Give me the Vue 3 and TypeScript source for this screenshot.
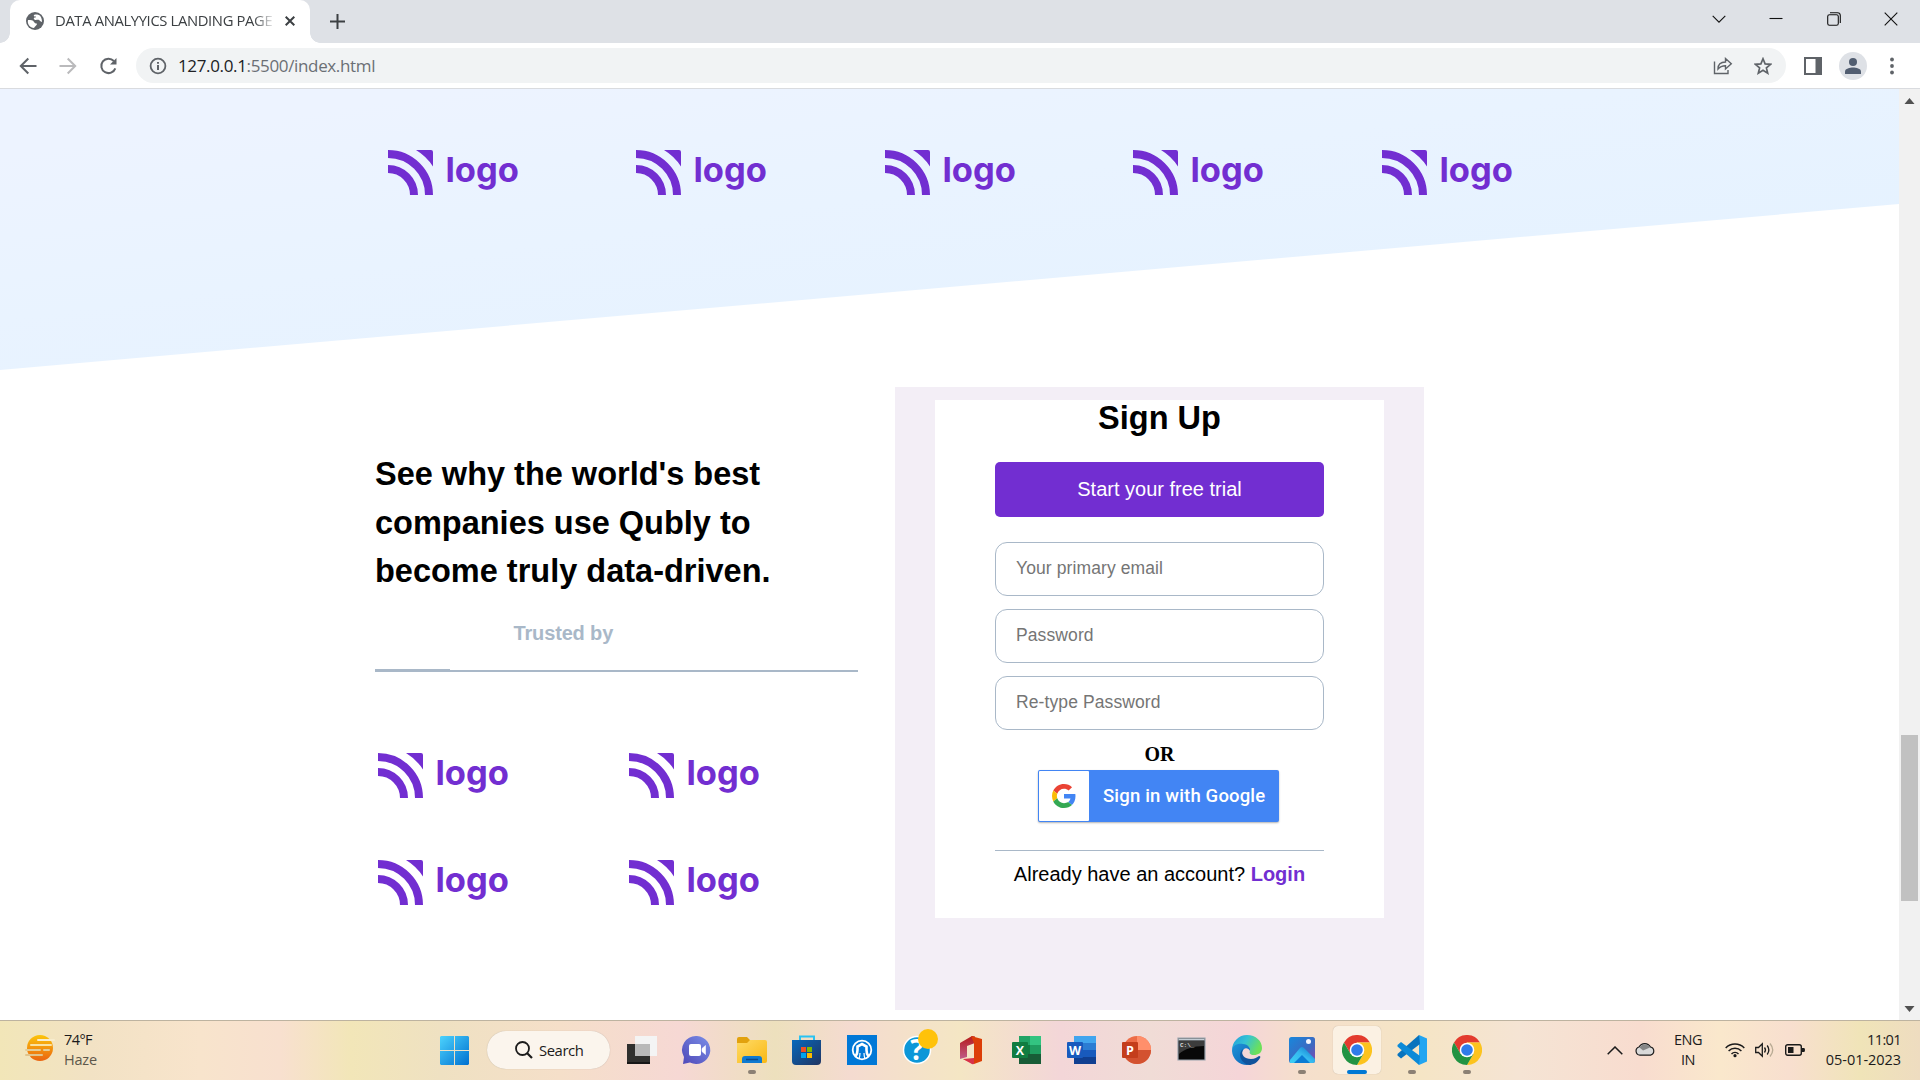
<script setup lang="ts">
interface Field {
  type: string
  placeholder: string
}

const partners: number[] = [1, 2, 3, 4, 5]
const trusted: number[] = [1, 2, 3, 4]
const fields: Field[] = [
  { type: 'text', placeholder: 'Your primary email' },
  { type: 'password', placeholder: 'Password' },
  { type: 'password', placeholder: 'Re-type Password' },
]
</script>

<template>
  <svg class="defs" width="0" height="0">
    <defs>
      <symbol id="brand" viewBox="0 0 132 48">
        <g fill="none" stroke="#722ed1" stroke-width="8">
          <path d="M0 4A41 41 0 0 1 41 45" />
          <path d="M0 19A26 26 0 0 1 26 45" />
        </g>
        <path d="M28 0H43Q45 0 45 2V16.5A53 53 0 0 0 28 0Z" fill="#722ed1" />
        <text x="57.5" y="32" font-family="Inter, sans-serif" font-size="34" font-weight="700" fill="#722ed1" textLength="73.5" lengthAdjust="spacingAndGlyphs">logo</text>
      </symbol>
      <symbol id="chrome" viewBox="-15 -15 30 30">
        <path d="M-13 -7.5A15 15 0 0 1 13 -7.5H0L-6.5 3.75Z" fill="#e33b2e" />
        <path d="M13 -7.5A15 15 0 0 1 0 15L6.5 3.75L0 -7.5Z" fill="#fcc31e" />
        <path d="M0 15A15 15 0 0 1 -13 -7.5L-6.5 3.75L6.5 3.75Z" fill="#229342" />
        <circle r="7.3" fill="#fff" />
        <circle r="5.8" fill="#2f7bea" />
      </symbol>
      <linearGradient id="win" x1="0" y1="0" x2="1" y2="1"><stop offset="0" stop-color="#4cd3fd" /><stop offset="1" stop-color="#0070d0" /></linearGradient>
      <linearGradient id="sun" x1="0" y1="0" x2="0" y2="1"><stop offset="0" stop-color="#fcc50c" /><stop offset="1" stop-color="#ea6410" /></linearGradient>
      <linearGradient id="chat" x1="1" y1="0" x2="0" y2="1"><stop offset="0" stop-color="#7a8fe8" /><stop offset="1" stop-color="#5048b8" /></linearGradient>
      <linearGradient id="folder" x1="0" y1="0" x2="1" y2="1"><stop offset="0" stop-color="#ffdb67" /><stop offset="1" stop-color="#f9b814" /></linearGradient>
      <linearGradient id="store" x1="0" y1="0" x2="1" y2="1"><stop offset="0" stop-color="#0669bd" /><stop offset="1" stop-color="#213461" /></linearGradient>
      <linearGradient id="edgeTop" x1="0" y1="0" x2="1" y2=".4"><stop offset="0" stop-color="#229bdc" /><stop offset=".5" stop-color="#35c3d4" /><stop offset="1" stop-color="#6ce05a" /></linearGradient>
      <linearGradient id="edgeLow" x1="0" y1="0" x2="1" y2="1"><stop offset="0" stop-color="#2094d8" /><stop offset="1" stop-color="#0b60b4" /></linearGradient>
      <linearGradient id="photo" x1="0" y1="0" x2="1" y2="1"><stop offset="0" stop-color="#1888dc" /><stop offset=".6" stop-color="#3d68c0" /><stop offset="1" stop-color="#8a45b0" /></linearGradient>
      <linearGradient id="hill" x1="0" y1="1" x2="1" y2="0"><stop offset="0" stop-color="#3bd0f5" /><stop offset=".5" stop-color="#35b9ef" /><stop offset="1" stop-color="#0b72c8" /></linearGradient>
      <linearGradient id="office" x1="0" y1="0" x2="0" y2="1"><stop offset="0" stop-color="#b51b1b" /><stop offset="1" stop-color="#c05a88" /></linearGradient>
    </defs>
  </svg>

  <div class="screen">
    <header class="tabs">
      <div class="tab">
        <svg class="favicon" width="18" height="18" viewBox="-9 -9 18 18">
          <circle r="9" fill="#5f6368" />
          <path d="M-7-1C-4-1-2-1-1 1S2 2 2 3 0 5-1 7C-5 7-8 3-7-1ZM-1-6C1-7 4-6 4-6C6-5 7-2 7 1C5 0 5 0 4-1S0 0-1-2 1-3 1-4-2-4-1-6Z" fill="#fff" />
        </svg>
        <span class="tab-title">DATA ANALYYICS LANDING PAGE</span>
        <svg class="tab-close" width="10" height="10" viewBox="0 0 10 10"><path d="M.7.7L9.3 9.3M9.3.7L.7 9.3" stroke="#3c4043" stroke-width="2" /></svg>
      </div>
      <svg class="new-tab" width="15" height="15" viewBox="0 0 15 15"><path d="M7.5 0V15M0 7.5H15" stroke="#3c4043" stroke-width="2" /></svg>
      <div class="window-controls">
        <svg width="14" height="14" viewBox="0 0 14 14"><path d="M.7 3.8L7 10.2L13.3 3.8" /></svg>
        <svg width="14" height="14" viewBox="0 0 14 14"><path d="M.5 6.5H13.5" /></svg>
        <svg width="14" height="14" viewBox="0 0 14 14"><rect x=".7" y="2.7" width="10.6" height="10.6" rx="1.8" /><path d="M3 .7H10.5Q13.3 .7 13.3 3.5V11" /></svg>
        <svg width="14" height="14" viewBox="0 0 14 14"><path d="M.7 .7L13.3 13.3M13.3 .7L.7 13.3" /></svg>
      </div>
    </header>

    <nav class="toolbar">
      <svg class="nav-icon" width="18" height="18" viewBox="0 0 18 18"><path d="M17.5 9H2M9.3 1.5L1.8 9L9.3 16.5" /></svg>
      <svg class="nav-icon off" width="18" height="18" viewBox="0 0 18 18"><path d="M.5 9H16M8.7 1.5L16.2 9L8.7 16.5" /></svg>
      <svg class="nav-icon" width="18" height="18" viewBox="0 0 18 18"><path d="M16.3 11.3A7.2 7.2 0 1 1 14.8 4" /><path d="M17.5 1V7.5H11Z" fill="#5f6368" stroke="none" /></svg>
      <div class="omnibox">
        <svg width="18" height="18" viewBox="0 0 18 18"><circle cx="9" cy="9" r="7.4" fill="none" stroke="#5f6368" stroke-width="1.8" /><path d="M9 8V13M9 5V6.8" stroke="#5f6368" stroke-width="2" /></svg>
        <span class="url"><b>127.0.0.1</b>:5500/index.html</span>
        <svg class="share" width="20" height="18" viewBox="0 0 20 18" fill="none" stroke="#5f6368" stroke-width="1.4"><path d="M1.5 4.5V16.5H15V13" /><path d="M5 12C5 7.500 8 5 12.500 5V1.500L18.300 6.700L12.500 12V8.700C9 8.700 7 9.500 5 12Z" /></svg>
        <svg class="star" width="18" height="18" viewBox="0 0 18 18"><path d="M9 1.800L11.100 6.900L16.600 7.300L12.400 10.900L13.700 16.200L9 13.300L4.300 16.200L5.600 10.900L1.400 7.300L6.900 6.900Z" fill="none" stroke="#5f6368" stroke-width="1.700" /></svg>
      </div>
      <svg class="side" width="18" height="18" viewBox="0 0 18 18"><rect x="1" y="1" width="16" height="16" fill="#fff" stroke="#5f6368" stroke-width="2" /><path d="M11.500 0H18V18H11.500Z" fill="#5f6368" /></svg>
      <svg class="avatar" width="28" height="28" viewBox="-14 -14 28 28"><circle r="14" fill="#dee1e6" /><circle cy="-4" r="4" fill="#515d70" /><path d="M-8 8V5.500C-8 2.500-3 1.500 0 1.500S8 2.500 8 5.500V8Z" fill="#515d70" /></svg>
      <svg class="dots" width="4" height="18" viewBox="0 0 4 18" fill="#5f6368"><circle cx="2" cy="2.500" r="1.900" /><circle cx="2" cy="9" r="1.900" /><circle cx="2" cy="15.500" r="1.900" /></svg>
    </nav>

    <div class="viewport">
      <main class="page">
        <section class="hero">
          <svg v-for="n in partners" :key="n" class="logo"><use href="#brand" /></svg>
        </section>
        <section class="join">
          <div class="pitch">
            <h2>See why the world's best<br>companies use Qubly to<br>become truly data-driven.</h2>
            <p class="trusted">Trusted by</p>
            <div class="rule"><i></i></div>
            <div class="logo-grid">
              <svg v-for="n in trusted" :key="n" class="logo"><use href="#brand" /></svg>
            </div>
          </div>
          <div class="panel">
            <form class="card">
              <h2>Sign Up</h2>
              <button type="button" class="trial">Start your free trial</button>
              <input v-for="f in fields" :key="f.placeholder" :type="f.type" :placeholder="f.placeholder">
              <strong class="or">OR</strong>
              <div class="google">
                <span class="g-box">
                  <svg width="24" height="24" viewBox="0 0 48 48">
                    <path fill="#EA4335" d="M24 9.500c3.540 0 6.710 1.220 9.210 3.600l6.850-6.850C35.900 2.380 30.470 0 24 0 14.620 0 6.510 5.380 2.560 13.220l7.980 6.190C12.430 13.720 17.740 9.500 24 9.500z" />
                    <path fill="#4285F4" d="M46.980 24.550c0-1.570-.15-3.090-.38-4.550H24v9.020h12.940c-.58 2.960-2.260 5.480-4.780 7.180l7.730 6c4.510-4.180 7.090-10.360 7.090-17.650z" />
                    <path fill="#FBBC05" d="M10.530 28.590c-.48-1.450-.76-2.990-.76-4.590s.27-3.140.76-4.590l-7.980-6.190C.92 16.460 0 20.120 0 24c0 3.880.92 7.540 2.560 10.780l7.970-6.190z" />
                    <path fill="#34A853" d="M24 48c6.480 0 11.930-2.130 15.890-5.810l-7.730-6c-2.150 1.450-4.920 2.300-8.160 2.300-6.260 0-11.570-4.220-13.470-9.910l-7.980 6.190C6.510 42.620 14.620 48 24 48z" />
                  </svg>
                </span>
                <span class="g-text">Sign in with Google</span>
              </div>
              <p class="login">Already have an account? <b>Login</b></p>
            </form>
          </div>
        </section>
      </main>
      <aside class="scrollbar">
        <svg width="11" height="6" viewBox="0 0 10 6"><path d="M0 6L5 0L10 6Z" fill="#505050" /></svg>
        <i class="thumb"></i>
        <svg class="down" width="11" height="6" viewBox="0 0 10 6"><path d="M0 0L5 6L10 0Z" fill="#505050" /></svg>
      </aside>
    </div>

    <footer class="taskbar">
      <div class="weather">
        <svg width="30" height="28" viewBox="0 0 30 28">
          <circle cx="15" cy="13" r="13" fill="url(#sun)" />
          <g stroke-linecap="round" stroke-width="2"><path d="M13 5H29" stroke="#f7edcf" /><path d="M6 10H26" stroke="#f9e3a4" /><path d="M1 15H15M19 15H24" stroke="#e3cd98" /><path d="M1 20H17" stroke="#e0c48c" /></g>
        </svg>
        <div><span class="temp">74°F</span><span class="haze">Haze</span></div>
      </div>

      <svg class="start" width="29" height="29" viewBox="0 0 29 29"><path d="M1 0H14V14H0V1ZM15 0H28L29 1V14H15ZM0 15H14V29H1L0 28ZM15 15H29V28L28 29H15Z" fill="url(#win)" /></svg>

      <div class="search">
        <svg width="18" height="18" viewBox="0 0 18 18"><circle cx="7.500" cy="7.500" r="6.500" fill="none" stroke="#1b1b1b" stroke-width="1.800" /><path d="M12 12L17 17" stroke="#1b1b1b" stroke-width="2.200" /></svg>
        <span>Search</span>
      </div>

      <div class="apps">
        <div class="slot"><svg viewBox="-24 -24 48 48"><path d="M-15-6H8V14H-15Z" fill="#30302e" /><path d="M-15 12H8V14H-15Z" fill="#171717" /><path d="M-7-14H15V6H-7Z" fill="#f4f4f4" /><path d="M-7-6H8V6H-7Z" fill="#b9b9b9" /></svg></div>
        <div class="slot"><svg viewBox="-24 -24 48 48"><path d="M0-14A14 14 0 1 1-7 12.500L-14 14L-13 7A14 14 0 0 1 0-14Z" fill="url(#chat)" /><rect x="-8" y="-6" width="12" height="12" rx="2" fill="#fff" /><path d="M5-1.500L8.500-4.500V4.500L5 1.500Z" fill="#fff" stroke="#fff" stroke-width=".6" /></svg></div>
        <div class="slot"><svg viewBox="-24 -24 48 48"><path d="M-15-11Q-15-13-13-13H-5L-2-10H4V0H-15Z" fill="#e2a20e" /><path d="M-15-7H-5L-2-10H13Q15-10 15-8V11Q15 13 13 13H-15Z" fill="url(#folder)" /><path d="M-10 13V9Q-10 6-7 6H7Q10 6 10 9V13Z" fill="#0f7ad0" /><path d="M-6 9.500H6" stroke="#0a4a8c" stroke-width="1.500" /></svg><i></i></div>
        <div class="slot"><svg viewBox="-24 -24 48 48"><path d="M-7-9V-13.500H7V-9" fill="none" stroke="#29c3f3" stroke-width="2" /><path d="M-15-10H14V11Q14 15 10 15H-11Q-15 15-15 11Z" fill="url(#store)" /><path d="M-6-3H-1V2H-6Z" fill="#f25022" /><path d="M0-3H5V2H0Z" fill="#7fba00" /><path d="M-6 3H-1V8H-6Z" fill="#00a4ef" /><path d="M0 3H5V8H0Z" fill="#ffb900" /></svg></div>
        <div class="slot"><svg viewBox="-24 -24 48 48"><path d="M-15-15H15V15H-15Z" fill="#0078d7" /><circle r="9.300" fill="none" stroke="#fff" stroke-width="1.800" /><path d="M-6.500 6.500Q-4.500 4-4.500 0V-3.500L0-6L4.500-3.500V0Q4.500 4 6.500 6.500" fill="none" stroke="#fff" stroke-width="2.600" /><path d="M-3 9Q-2 6-2 3M3 9Q2 6 2 3" fill="none" stroke="#fff" stroke-width="1.200" /></svg></div>
        <div class="slot"><svg viewBox="-24 -24 48 48"><circle r="13.500" fill="#0c97d8" stroke="#fff" stroke-width="1.500" /><text y="10" text-anchor="middle" font-family="Open Sans, sans-serif" font-size="28" font-weight="700" fill="#fff">?</text><circle cx="11" cy="-11" r="10" fill="#ffc20a" /></svg></div>
        <div class="slot"><svg viewBox="-24 -24 48 48"><path d="M-12-7L0-14L3-13.500V-7L-5-4V7L-12 9Z" fill="url(#office)" /><path d="M-1-14L10-11V11L2 14L-9 9L2 10V-7Z" fill="#dc3e08" /><path d="M-9 9L2 8V14Q0 14.500-1 13.500Z" fill="#d8324a" /></svg></div>
        <div class="slot"><svg viewBox="-24 -24 48 48"><path d="M-8-14H3V0H-8Z" fill="#21a366" /><path d="M3-14H14V-5H3Z" fill="#33c481" /><path d="M3-5H14V4H3Z" fill="#1f9d60" /><path d="M-8-5H3V4H-8Z" fill="#107c41" /><path d="M-8 4H14V14H-8Z" fill="#185c37" /><rect x="-15" y="-8" width="16" height="16" rx="1" fill="#107c41" /><text x="-7" y="4.500" text-anchor="middle" font-family="Open Sans, sans-serif" font-size="12.500" font-weight="700" fill="#fff">X</text></svg></div>
        <div class="slot"><svg viewBox="-24 -24 48 48"><path d="M-8-14H14V-7H-8Z" fill="#41a5ee" /><path d="M-8-7H14V0H-8Z" fill="#2b7cd3" /><path d="M-8 0H14V7H-8Z" fill="#185abd" /><path d="M-8 7H14V14H-8Z" fill="#103f91" /><rect x="-15" y="-8" width="16" height="16" rx="1" fill="#185abd" /><text x="-7" y="4.500" text-anchor="middle" font-family="Open Sans, sans-serif" font-size="12.500" font-weight="700" fill="#fff">W</text></svg></div>
        <div class="slot"><svg viewBox="-24 -24 48 48"><circle r="14" fill="#ed6c47" /><path d="M0-14A14 14 0 0 1 14 0H0Z" fill="#ff8f6b" /><path d="M-14 0H14A14 14 0 0 1-14 0Z" fill="#d35230" /><rect x="-15" y="-8" width="16" height="16" rx="1" fill="#c43e1c" /><text x="-7" y="4.500" text-anchor="middle" font-family="Open Sans, sans-serif" font-size="12.500" font-weight="700" fill="#fff">P</text></svg></div>
        <div class="slot"><svg viewBox="-24 -24 48 48"><path d="M-14-12H13V10H-14Z" fill="#080808" stroke="#9aa4ae" stroke-width="1.200" /><path d="M-13.500-11.500H12.500V-9.500H-13.500Z" fill="#c3ccd4" /><path d="M-13-9H12V-4C2-4-8-1-13 4Z" fill="#3c3c3c" /><text x="-12" y="-3" font-family="Liberation Mono, monospace" font-size="6" font-weight="700" fill="#ddd">C:\_</text></svg></div>
        <div class="slot"><svg viewBox="-24 -24 48 48"><path d="M-15 0A15 15 0 0 1 0-15C9-15 15-9 15-2C15 3 11 5 7 5C3 5 2 3 3 1C4-3 0-5-4-5C-10-5-14-3-15 0Z" fill="url(#edgeTop)" /><path d="M-15 1C-15-5-9-7-4-6C1-6 4-2 3 1C1-3-4-3-5 3C-5 10 2 15 7 12Q4 15 0 15A15 15 0 0 1-15 1Z" fill="url(#edgeLow)" /><path d="M-4-1C-7 5-2 9 4 9C8 9 10 7 12 6Q14 6 13 8C10 13 6 15 2 15C-6 13-10 4-4-1Z" fill="#10539c" /></svg></div>
        <div class="slot"><svg viewBox="-24 -24 48 48"><rect x="-13" y="-13" width="26" height="26" rx="2.500" fill="url(#photo)" /><path d="M-12 10L-2-2Q0-4 2-2L13 9V11Q13 13 11 13H-11Q-13 13-12 10Z" fill="url(#hill)" /><path d="M-8 13L0 5L8 13Z" fill="#0b7cd4" /><circle cx="6.500" cy="-8.500" r="2.500" fill="#f3f6fd" /></svg><i></i></div>
        <div class="slot active"><svg viewBox="-24 -24 48 48"><use href="#chrome" x="-15" y="-15" width="30" height="30" /></svg><i></i></div>
        <div class="slot"><svg viewBox="-24 -24 48 48"><path d="M7-15L15-11.500V11.500L7 15Z" fill="#22a5f1" /><path d="M7-15L8-6L-11 8.500L-14.500 5.500V4Z" fill="#0873bd" /><path d="M7 15L8 6L-11-8L-14.500-5V-3.500Z" fill="#0b8ad8" /></svg><i></i></div>
        <div class="slot"><svg viewBox="-24 -24 48 48"><use href="#chrome" x="-15" y="-15" width="30" height="30" /></svg><i></i></div>
      </div>

      <div class="tray">
        <svg class="t-chev" width="16" height="9" viewBox="0 0 16 9"><path d="M.7 8.300L8 1L15.300 8.300" fill="none" stroke="#1b1b1b" stroke-width="1.500" /></svg>
        <svg class="t-cloud" width="20" height="14" viewBox="0 0 20 14"><path d="M5 13.200A4.200 4.200 0 0 1 4 5A6.500 6.500 0 0 1 15.500 5A4.200 4.200 0 0 1 15.500 13.200Z" fill="#d9d9d9" stroke="#1b1b1b" stroke-width="1.200" /><path d="M4.500 5.500A6 6 0 0 1 15 5.500L8 8.500Z" fill="#868686" /></svg>
        <div class="lang"><span>ENG</span><span>IN</span></div>
        <svg class="t-wifi" width="20" height="16" viewBox="0 0 20 16" fill="none" stroke="#1b1b1b" stroke-width="1.500"><path d="M.7 6A13 13 0 0 1 19.300 6" /><path d="M3.600 9A9 9 0 0 1 16.400 9" /><path d="M6.500 12A5 5 0 0 1 13.500 12" /><circle cx="10" cy="13.700" r="1.600" fill="#1b1b1b" stroke="none" /></svg>
        <svg class="t-vol" width="20" height="16" viewBox="0 0 20 16" fill="none" stroke="#1b1b1b" stroke-width="1.300"><path d="M.7 5.500H3.500L7.300 1.700V14.300L3.500 10.500H.7Z" /><path d="M9.500 5.500Q11.500 8 9.500 10.500M12.200 3.500Q15.500 8 12.200 12.500" /><path d="M15 1.500Q20.500 8 15 14.500" stroke="#b9ab94" /></svg>
        <svg class="t-bat" width="20" height="12" viewBox="0 0 20 12"><rect x=".7" y=".7" width="15.600" height="10.600" rx="2" fill="none" stroke="#1b1b1b" stroke-width="1.400" /><path d="M3 3H8.500V9H3Z" fill="#1b1b1b" /><path d="M17 4H19Q20 4 20 6T19 8H17Z" fill="#1b1b1b" /></svg>
        <div class="clock"><span>11:01</span><span class="date">05-01-2023</span></div>
      </div>
    </footer>
  </div>
</template>

<style>
body {
  margin: 0;
  overflow: hidden;
}
</style>

<style scoped>
* {
  box-sizing: border-box;
}
.defs {
  position: absolute;
}
svg {
  display: block;
  flex: none;
}
.screen {
  width: 1920px;
  height: 1080px;
  display: flex;
  flex-direction: column;
  overflow: hidden;
  background: #fff;
  font-family: "Liberation Sans", Arial, sans-serif;
}
.tabs {
  height: 43px;
  background: #dee1e6;
  display: flex;
  align-items: flex-start;
  flex: none;
}
.tab {
  position: relative;
  margin-left: 10px;
  width: 300px;
  height: 43px;
  background: #fff;
  border-radius: 10px 10px 0 0;
  display: flex;
  padding-left: 16px;
}
.tab::before,
.tab::after {
  content: "";
  position: absolute;
  bottom: 0;
  width: 10px;
  height: 10px;
}
.tab::before {
  left: -10px;
  background: radial-gradient(circle at 0 0, transparent 9.5px, #fff 10px);
}
.tab::after {
  right: -10px;
  background: radial-gradient(circle at 100% 0, transparent 9.5px, #fff 10px);
}
.favicon {
  margin-top: 12px;
}
.tab-title {
  margin-left: 11px;
  width: 220px;
  height: 42px;
  line-height: 41px;
  overflow: hidden;
  white-space: nowrap;
  font-family: "Open Sans", sans-serif;
  font-size: 14.8px;
  letter-spacing: -0.36px;
  color: #3c4043;
  -webkit-mask-image: linear-gradient(90deg, #000 198px, transparent 221px);
  mask-image: linear-gradient(90deg, #000 198px, transparent 221px);
}
.tab-close {
  margin: 16px 0 0 10px;
}
.new-tab {
  margin: 14px 0 0 20px;
}
.window-controls {
  margin-left: auto;
  padding: 12px 22px 0 0;
  display: flex;
  gap: 43.3px;
}
.window-controls svg {
  fill: none;
  stroke: #111;
  stroke-width: 1.1;
}
.toolbar {
  height: 46px;
  border-bottom: 1px solid #d9dbdf;
  display: flex;
  align-items: center;
  padding-left: 18.5px;
  flex: none;
}
.nav-icon {
  margin-right: 22px;
  fill: none;
  stroke: #5f6368;
  stroke-width: 2;
}
.nav-icon.off {
  stroke: #bababc;
}
.omnibox {
  margin-left: -3px;
  width: 1650px;
  height: 35px;
  border-radius: 18px;
  background: #f1f3f4;
  display: flex;
  align-items: center;
  padding-left: 13px;
}
.url {
  margin-left: 11.5px;
  font-family: "Open Sans", sans-serif;
  font-size: 17px;
  letter-spacing: -0.35px;
  line-height: 35px;
  color: #6b6f74;
}
.url b {
  font-weight: 400;
  color: #202124;
}
.share {
  margin-left: auto;
}
.star {
  margin: 0 13.5px 0 21px;
}
.side {
  margin-left: 18px;
}
.avatar {
  margin-left: 17.5px;
}
.dots {
  margin-left: 23px;
}
.viewport {
  height: 931px;
  display: flex;
  flex: none;
}
.page {
  width: 1899px;
  overflow: hidden;
}
.hero {
  height: 281px;
  padding: 61px 0 0 388px;
  display: flex;
  background: linear-gradient(172deg, #edf3ff 12%, #e9f3ff 42%, #e5f2ff 75%);
  clip-path: polygon(0 0, 100% 0, 100% 115px, 0 100%);
}
.logo {
  width: 132px;
  height: 48px;
}
.hero .logo {
  margin-right: 116.4px;
}
.join {
  display: flex;
  gap: 37px;
  padding: 17px 0 0 375px;
}
.pitch {
  width: 483px;
  padding-top: 63px;
}
h2 {
  margin: 0;
  font-size: 32.5px;
  font-weight: 700;
  line-height: 48.5px;
  color: #000;
}
.trusted {
  margin: 25.75px 0 0 138.5px;
  font-size: 20px;
  font-weight: 700;
  line-height: 24px;
  letter-spacing: -0.15px;
  color: #a9b8c8;
}
.rule {
  margin-top: 24px;
  height: 3px;
  background: linear-gradient(#a9b8c8, #a9b8c8) 0 1px / 100% 2px no-repeat;
}
.rule i {
  display: block;
  width: 75px;
  height: 3px;
  background: #a9b8c8;
}
.logo-grid {
  display: grid;
  grid-template-columns: 251px 132px;
  row-gap: 59px;
  padding: 81px 0 0 3px;
}
.panel {
  width: 529px;
  height: 623px;
  padding: 13px 40px 0;
  background: #f3eef6;
}
.card {
  height: 518px;
  padding: 0 60px;
  background: #fff;
  display: flex;
  flex-direction: column;
}
.card h2 {
  text-align: center;
  line-height: 36px;
  height: 62px;
}
.trial {
  height: 55px;
  flex: none;
  margin-bottom: 25px;
  padding: 0;
  border: 0;
  border-radius: 5px;
  background: #722ed1;
  color: #fff;
  font: 20px "Liberation Sans", Arial, sans-serif;
}
input {
  width: 100%;
  height: 54px;
  flex: none;
  margin: 0 0 13px;
  padding: 0 0 1px 20px;
  border: 1px solid #a9b8c8;
  border-radius: 12px;
  background: #fff;
  font: 17.5px "Liberation Sans", Arial, sans-serif;
  letter-spacing: 0.1px;
}
input::placeholder {
  color: #757575;
}
.or {
  height: 27px;
  text-align: center;
  font: 700 20px/23px "Liberation Serif", serif;
}
.google {
  width: 241px;
  height: 52px;
  flex: none;
  margin-left: 43px;
  padding: 1px;
  display: flex;
  border-radius: 2px;
  background: #4285f4;
  box-shadow: 0 1px 2px rgba(0, 0, 0, 0.3);
}
.g-box {
  width: 50px;
  height: 50px;
  background: #fff;
  border-radius: 1px;
  display: flex;
  align-items: center;
  justify-content: center;
}
.g-text {
  margin-left: 14px;
  font: 500 18.5px/51px Roboto, sans-serif;
  letter-spacing: 0.17px;
  color: #fff;
  white-space: nowrap;
}
.login {
  margin: 28px 0 0;
  border-top: 1px solid #a9b8c8;
  text-align: center;
  font-size: 20px;
  line-height: 24px;
  padding-top: 11px;
  white-space: nowrap;
  color: #000;
}
.login b {
  color: #722ed1;
}
.scrollbar {
  width: 21px;
  background: #f1f1f1;
  display: flex;
  flex-direction: column;
  align-items: center;
  padding-top: 9px;
}
.thumb {
  width: 17px;
  height: 166px;
  margin-top: 631px;
  background: #c1c1c1;
}
.down {
  margin-top: 105px;
}
.taskbar {
  height: 60px;
  flex: none;
  display: flex;
  border-top: 1px solid #bdb3a0;
  font-family: "Open Sans", sans-serif;
  color: #1b1b1b;
  background: linear-gradient(90deg, #f2e6b8 0, #f2e2c4 90px, #f8e4cc 200px, #f8e0cf 280px, #f2e6b8 350px, #efe1c2 440px, #f5dfc9 560px, #f6d8d4 680px, #ede0bd 775px, #f4dbd0 850px, #f4e6c4 960px, #f3d6d8 1060px, #f0dcd6 1150px, #f5d5d8 1240px, #f5dfcc 1300px, #f5e5c5 1420px, #f5e4d4 1520px, #f8dccf 1640px, #fae8cc 1720px, #f8dfcf 1790px, #f0e4b8 1860px, #eedcc0 1920px);
}
.weather {
  width: 440px;
  padding: 14px 0 0 25px;
  display: flex;
}
.weather div {
  margin: -5px 0 0 9px;
  display: flex;
  flex-direction: column;
  font-size: 14.5px;
  line-height: 20px;
}
.temp {
  letter-spacing: -0.6px;
}
.haze {
  color: #5d574b;
  letter-spacing: -0.2px;
}
.start {
  margin-top: 15px;
}
.search {
  margin: 10px 4px 0 18px;
  width: 123px;
  height: 38px;
  border-radius: 19px;
  background: #fbf5ed;
  box-shadow: 0 0 1px rgba(0, 0, 0, 0.25);
  display: flex;
  align-items: center;
  padding-left: 28px;
}
.search span {
  margin-left: 6px;
  font-size: 14.8px;
  letter-spacing: -0.4px;
}
.apps {
  display: flex;
  padding-top: 5px;
}
.slot {
  position: relative;
  width: 55px;
  height: 48px;
  display: flex;
  justify-content: center;
}
.slot svg {
  width: 48px;
  height: 48px;
  overflow: visible;
}
.slot i {
  position: absolute;
  left: 24px;
  bottom: 0;
  width: 8px;
  height: 4px;
  border-radius: 2px;
  background: #8b8074;
}
.slot.active svg {
  background: #fbf1e3;
  border-radius: 5px;
  box-shadow: 0 0 1px rgba(0, 0, 0, 0.25);
}
.slot.active i {
  left: 18px;
  width: 20px;
  background: #0078d4;
}
.tray {
  margin-left: auto;
  padding-right: 19px;
  display: flex;
  align-items: flex-start;
}
.t-chev {
  margin: 25px 12px 0 0;
}
.t-cloud {
  margin: 21px 15px 0 0;
}
.lang,
.clock {
  display: flex;
  flex-direction: column;
  font-size: 14.5px;
  line-height: 20px;
  padding-top: 9px;
}
.lang {
  width: 36px;
  align-items: center;
  letter-spacing: -0.5px;
}
.t-wifi {
  margin: 21px 10px 0 19px;
}
.t-vol {
  margin: 21px 10px 0 0;
}
.t-bat {
  margin: 23px 0 0;
}
.clock {
  width: 96px;
  align-items: flex-end;
  letter-spacing: -0.6px;
}
.clock .date {
  letter-spacing: -0.05px;
}
</style>
